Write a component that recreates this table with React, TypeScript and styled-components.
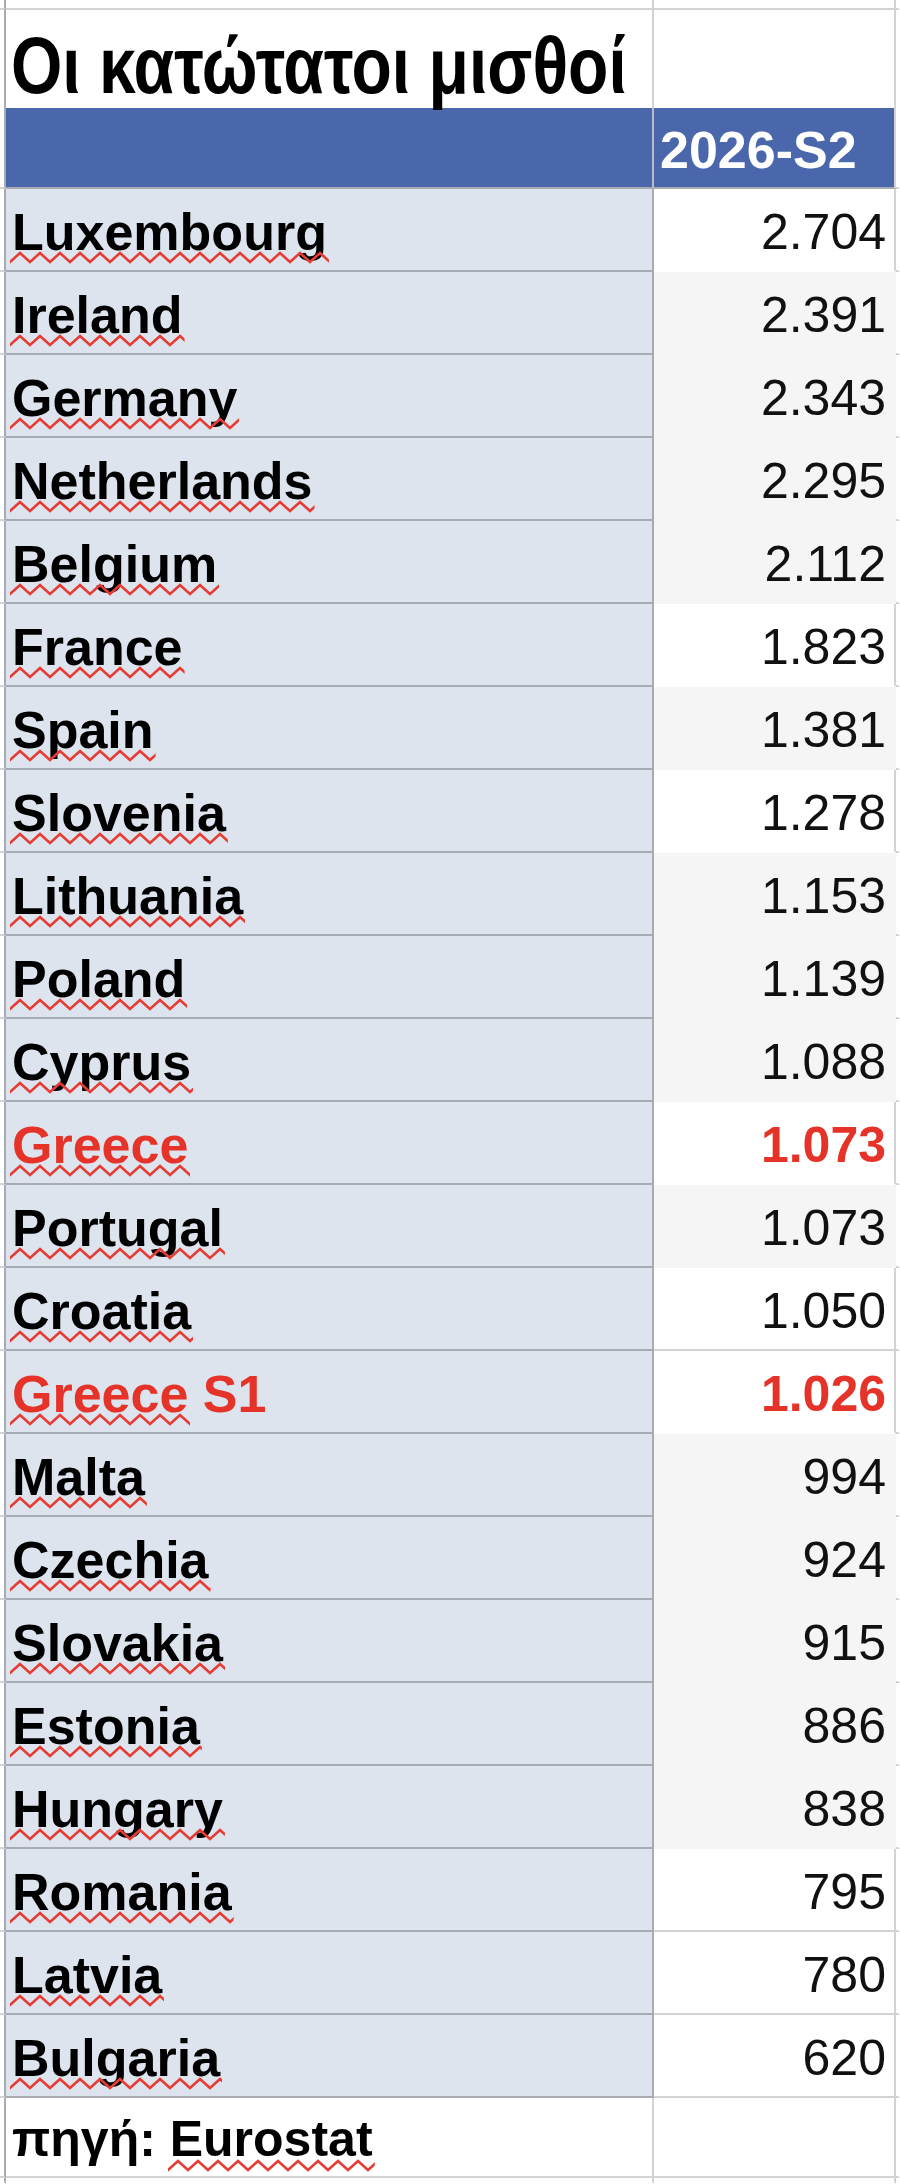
import React from "react";
import styled, { createGlobalStyle } from "styled-components";

const GlobalStyle = createGlobalStyle`
  html, body { margin: 0; padding: 0; background: #ffffff; }
  body { font-family: "Liberation Sans", Arial, sans-serif; color: #000000; }
`;

const DARK = "#a8acb2";
const LIGHT = "#d3d3d3";
const NAME_BG = "#dde4ee";
const BLUE = "#4a67ab";
const RED = "#e5332a";
const GRAY_BG = "#f5f5f5";

type Entry = { name: string; suffix?: string; value: string; red?: boolean; gray?: boolean };

const data: Entry[] = [
  { name: "Luxembourg", value: "2.704" },
  { name: "Ireland", value: "2.391", gray: true },
  { name: "Germany", value: "2.343", gray: true },
  { name: "Netherlands", value: "2.295", gray: true },
  { name: "Belgium", value: "2.112", gray: true },
  { name: "France", value: "1.823" },
  { name: "Spain", value: "1.381", gray: true },
  { name: "Slovenia", value: "1.278" },
  { name: "Lithuania", value: "1.153", gray: true },
  { name: "Poland", value: "1.139", gray: true },
  { name: "Cyprus", value: "1.088", gray: true },
  { name: "Greece", value: "1.073", red: true },
  { name: "Portugal", value: "1.073", gray: true },
  { name: "Croatia", value: "1.050" },
  { name: "Greece", suffix: " S1", value: "1.026", red: true },
  { name: "Malta", value: "994", gray: true },
  { name: "Czechia", value: "924", gray: true },
  { name: "Slovakia", value: "915", gray: true },
  { name: "Estonia", value: "886", gray: true },
  { name: "Hungary", value: "838", gray: true },
  { name: "Romania", value: "795" },
  { name: "Latvia", value: "780" },
  { name: "Bulgaria", value: "620" },
];

const Sheet = styled.div`
  width: 900px;
  display: flex;
  flex-direction: column;
  overflow: hidden;
`;

const Row = styled.div<{ $h: number }>`
  display: grid;
  grid-template-columns: 6px 648px 242px 4px;
  height: ${(p) => p.$h}px;
`;

const Cell = styled.div<{ $bg?: string; $right?: string; $bottom?: string }>`
  box-sizing: border-box;
  min-width: 0;
  display: flex;
  align-items: center;
  background: ${(p) => p.$bg ?? "#ffffff"};
  border-right: 2px solid ${(p) => p.$right ?? "transparent"};
  border-bottom: 2px solid ${(p) => p.$bottom ?? "transparent"};
`;

const NameCell = styled(Cell)`
  padding: 6px 0 0 6px;
`;

const ValueCell = styled(Cell)`
  justify-content: flex-end;
  padding: 6px 8px 0 0;
`;

const HeaderValueCell = styled(Cell)`
  padding: 6px 0 0 6px;
`;

const TitleCell = styled(Cell)`
  padding: 10px 0 0 5px;
`;

const Title = styled.h1`
  margin: 0;
  font-family: "Liberation Sans", Arial, sans-serif;
  font-weight: 700;
  font-size: 80px;
  line-height: 1.15;
  white-space: nowrap;
  color: #000;
  transform: scaleX(0.825);
  transform-origin: left center;
`;

const Label = styled.span<{ $red?: boolean }>`
  font-weight: 700;
  font-size: 52px;
  line-height: 1.15;
  white-space: pre;
  color: ${(p) => (p.$red ? RED : "#000000")};
`;

const FooterLabel = styled(Label)`
  font-size: 50px;
`;

const HeaderText = styled.span`
  font-weight: 700;
  font-size: 52px;
  line-height: 1.15;
  color: #ffffff;
`;

const Value = styled.span<{ $red?: boolean }>`
  font-size: 50px;
  line-height: 1.15;
  font-weight: ${(p) => (p.$red ? 700 : 400)};
  color: ${(p) => (p.$red ? RED : "#111111")};
`;

const Word = styled.span`
  position: relative;
  display: inline-block;
`;

const SquiggleSvg = styled.svg`
  position: absolute;
  left: -2px;
  top: 48px;
  width: calc(100% + 4px);
  height: 13px;
  pointer-events: none;
`;

const Defs = styled.svg`
  position: absolute;
  width: 0;
  height: 0;
`;

const Squiggle = () => (
  <SquiggleSvg aria-hidden="true">
    <rect x="0" y="0" width="100%" height="100%" fill="url(#spell-zigzag)" />
  </SquiggleSvg>
);

const Spell = ({ children }: { children: React.ReactNode }) => (
  <Word>
    {children}
    <Squiggle />
  </Word>
);

export default function App() {
  return (
    <>
      <GlobalStyle />
      <Defs aria-hidden="true">
        <defs>
          <pattern id="spell-zigzag" x="0" y="0" width="20" height="13" patternUnits="userSpaceOnUse">
            <polyline
              points="-10,2 0,11 10,2 20,11 30,2"
              fill="none"
              stroke="#e63c34"
              strokeWidth="2.6"
            />
          </pattern>
        </defs>
      </Defs>
      <Sheet>
        <Row $h={10}>
          <Cell $right={DARK} $bottom={LIGHT} />
          <Cell $right={LIGHT} $bottom={LIGHT} />
          <Cell $right={LIGHT} $bottom={LIGHT} />
          <Cell $bottom={LIGHT} />
        </Row>
        <Row $h={98}>
          <Cell $right={DARK} $bottom={LIGHT} />
          <TitleCell $right={LIGHT} $bottom={DARK}>
            <Title>Οι κατώτατοι μισθοί</Title>
          </TitleCell>
          <Cell $right={LIGHT} $bottom={DARK} />
          <Cell $bottom={LIGHT} />
        </Row>
        <Row $h={81}>
          <Cell $right={DARK} $bottom={LIGHT} />
          <Cell $bg={BLUE} $right={"#b9bcc2"} $bottom={DARK} />
          <HeaderValueCell $bg={BLUE} $right={LIGHT} $bottom={DARK}>
            <HeaderText>2026-S2</HeaderText>
          </HeaderValueCell>
          <Cell $bottom={LIGHT} />
        </Row>
        {data.map((d, i) => {
          const next = data[i + 1];
          const nextGray = next ? !!next.gray : false;
          const valueBottom = !d.gray && !nextGray ? LIGHT : undefined;
          return (
            <Row $h={83} key={i}>
              <Cell $right={DARK} $bottom={LIGHT} />
              <NameCell $bg={NAME_BG} $right={DARK} $bottom={DARK}>
                <Label $red={d.red}>
                  <Spell>{d.name}</Spell>
                  {d.suffix}
                </Label>
              </NameCell>
              <ValueCell
                $bg={d.gray ? GRAY_BG : "#ffffff"}
                $right={d.gray ? undefined : LIGHT}
                $bottom={valueBottom}
              >
                <Value $red={d.red}>{d.value}</Value>
              </ValueCell>
              <Cell $bottom={LIGHT} />
            </Row>
          );
        })}
        <Row $h={80}>
          <Cell $right={DARK} $bottom={LIGHT} />
          <NameCell $right={LIGHT} $bottom={LIGHT}>
            <FooterLabel>
              πηγή: <Spell>Eurostat</Spell>
            </FooterLabel>
          </NameCell>
          <Cell $right={LIGHT} $bottom={LIGHT} />
          <Cell $bottom={LIGHT} />
        </Row>
        <Row $h={6}>
          <Cell $right={DARK} />
          <Cell $right={LIGHT} />
          <Cell $right={LIGHT} />
          <Cell />
        </Row>
      </Sheet>
    </>
  );
}
